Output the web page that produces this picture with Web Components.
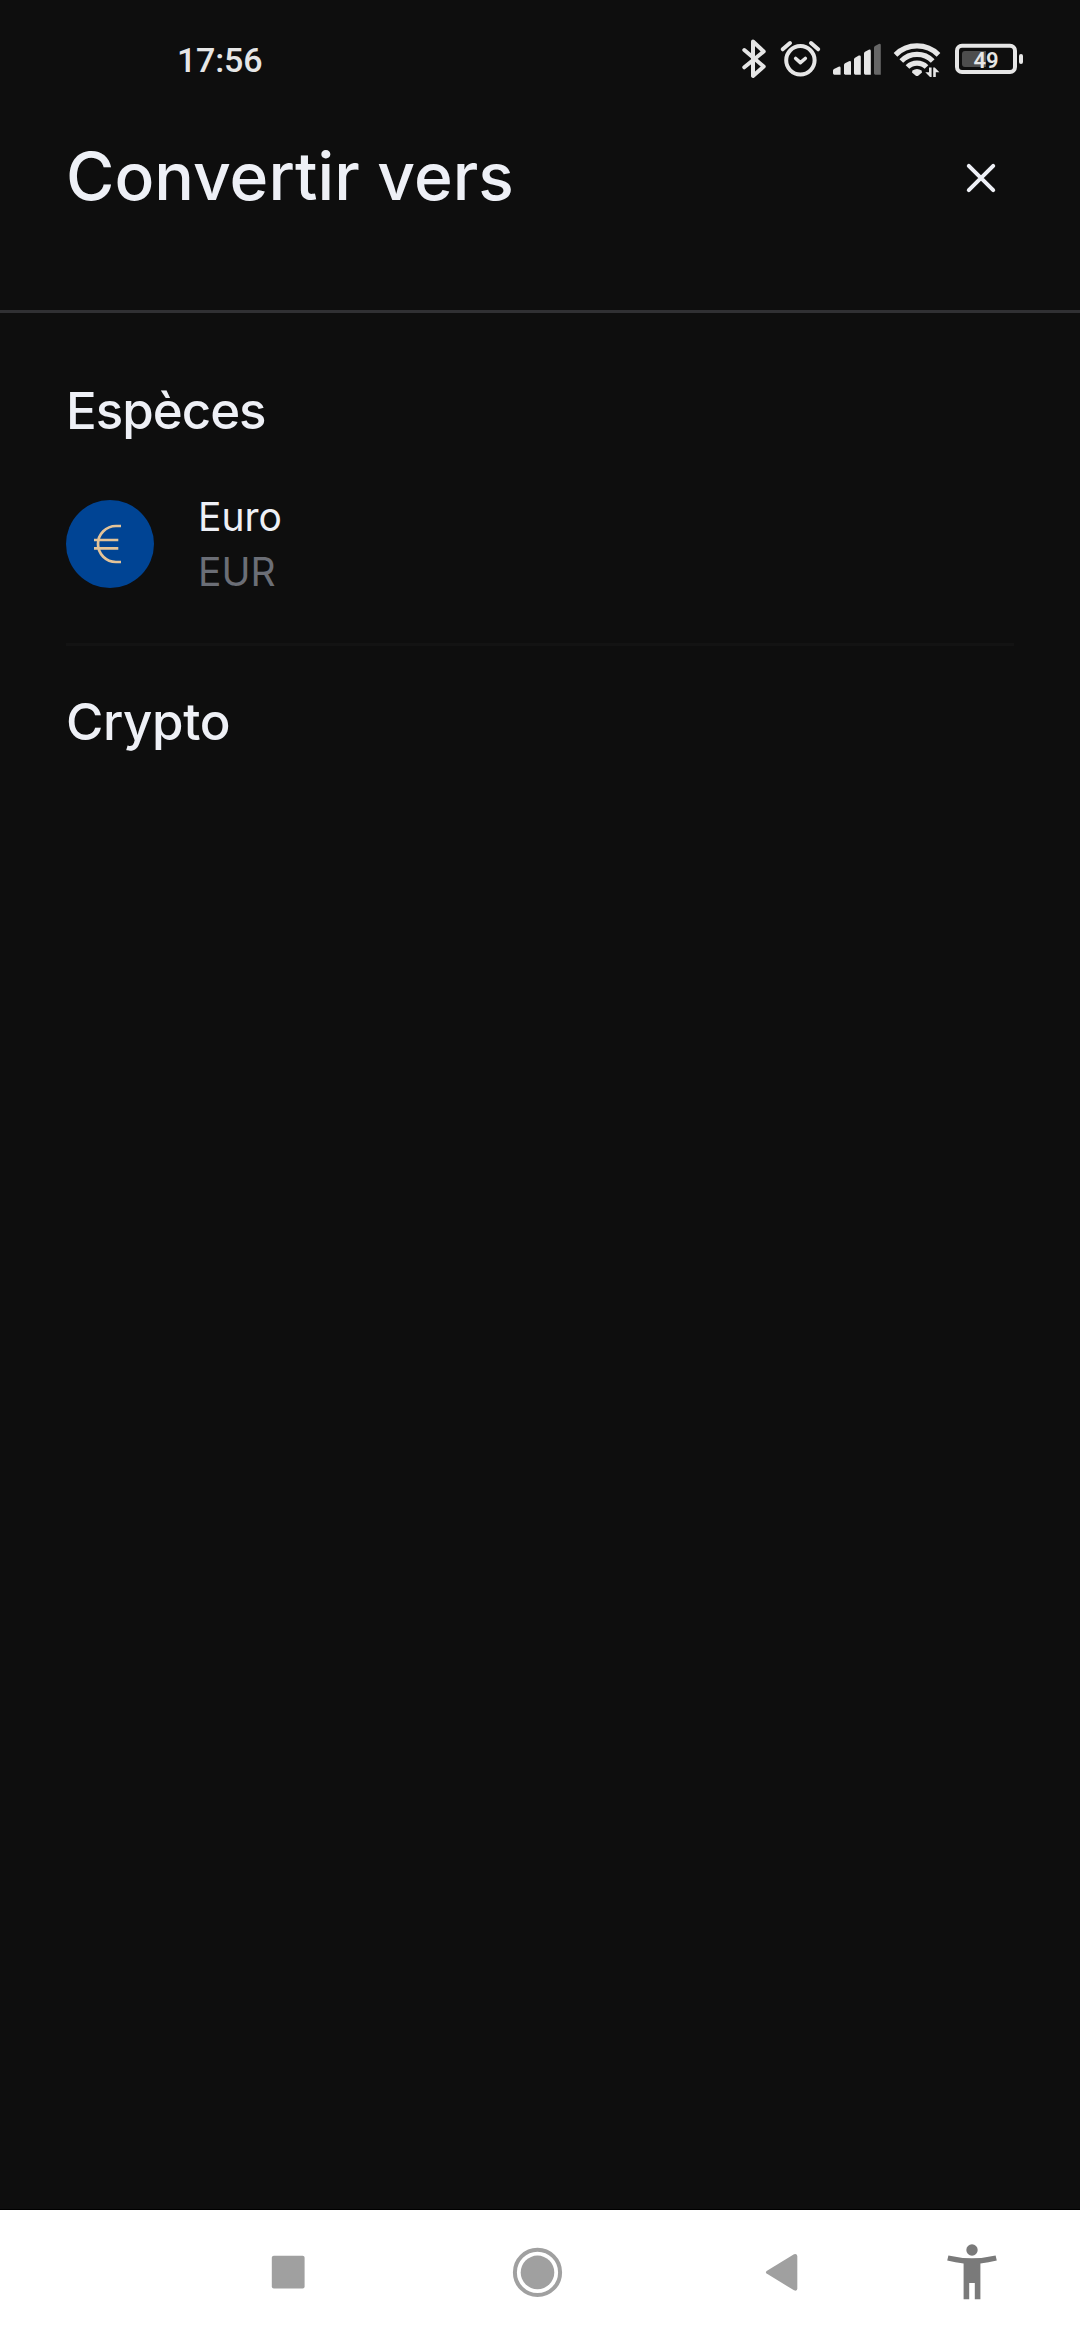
<!DOCTYPE html>
<html lang="fr">
<head>
<meta charset="utf-8">
<title>Convertir vers</title>
<style>
  body {
    margin: 0;
    background: #0e0e0e;
    color: #eef0f6;
    font-family: Inter, Roboto, sans-serif;
  }
</style>
</head>
<body>
<convert-screen>
  <status-bar slot="status" time="17:56" battery="49"></status-bar>
  <sheet-header slot="header">Convertir vers</sheet-header>
  <currency-section>
    <span slot="title">Espèces</span>
    <currency-row code="EUR">Euro</currency-row>
  </currency-section>
  <currency-section class="crypto">
    <span slot="title">Crypto</span>
  </currency-section>
  <nav-bar slot="nav"></nav-bar>
</convert-screen>

<script>
class ConvertScreen extends HTMLElement {
  connectedCallback() {
    this.attachShadow({ mode: 'open' });
    this.shadowRoot.innerHTML = `
      <style>
        :host {
          display: flex;
          flex-direction: column;
          width: 1080px;
          height: 2340px;
          overflow: hidden;
        }
        main {
          flex: 1;
          padding: 0 66px;
        }
      </style>
      <slot name="status"></slot>
      <slot name="header"></slot>
      <main><slot></slot></main>
      <slot name="nav"></slot>
    `;
  }
}

class StatusBar extends HTMLElement {
  connectedCallback() {
    this.attachShadow({ mode: 'open' });
    this.shadowRoot.innerHTML = `
      <style>
        :host {
          display: flex;
          justify-content: space-between;
          height: 100px;
          padding: 0 56px 0 177px;
          box-sizing: border-box;
          color: #e6e6e6;
          font-family: Roboto, sans-serif;
        }
        .time {
          padding-top: 40px;
          font-size: 34px;
          line-height: 40px;
          font-weight: 500;
          letter-spacing: -0.2px;
        }
        .icons {
          display: flex;
          height: 100px;
        }
        svg {
          display: block;
          fill: none;
          stroke: currentColor;
          stroke-width: 4;
          stroke-linecap: round;
          stroke-linejoin: round;
        }
        .solid {
          fill: currentColor;
          stroke: none;
        }
        .level {
          fill: #4d4d4d;
          stroke: none;
        }
      </style>
      <span class="time">${this.getAttribute('time')}</span>
      <div class="icons">
        <svg width="40" height="100" viewBox="738 0 40 100">
          <path d="M744.3 50L763.7 66.5L753 76V41.5L763.7 51.5L744.3 67.3"/>
        </svg>
        <svg width="50" height="100" viewBox="778 0 50 100">
          <circle cx="800.4" cy="60.3" r="14.2"/>
          <path d="M782.7 49.3L790 43M811 43L818.2 49.3"/>
          <path d="M795.7 58.5L800.4 62.7L805.3 58.5" stroke-width="3.6"/>
        </svg>
        <svg class="solid" width="60" height="100" viewBox="828 0 60 100">
          <path d="M833 70.5q0-1 1-1.6l4.6-2.2q2-.6 2 1.2v6.8h-6.2q-1.4 0-1.4-1.4z"/>
          <path d="M844 64.8q0-1 1-1.6l4-2q2-.6 2 1.2v12.3h-5.6q-1.4 0-1.4-1.4z"/>
          <path d="M854 59.3q0-1 1-1.6l3.8-2.1q2-.6 2 1.2v17.9h-5.4q-1.4 0-1.4-1.4z"/>
          <path d="M864 53.4q0-1 1-1.6l3.8-2.1q2-.6 2 1.2v23.8h-5.4q-1.4 0-1.4-1.4z"/>
          <path fill="#666" d="M874 47.7q0-1 1-1.6l3.8-2.1q2-.6 2 1.2v29.5h-5.4q-1.4 0-1.4-1.4z"/>
        </svg>
        <svg width="60" height="100" viewBox="888 0 60 100">
          <g stroke-width="5.2" stroke-linecap="butt">
            <path d="M895.5 54.8A30.5 30.5 0 0 1 938.5 54.8"/>
            <path d="M901.3 61A21.8 21.8 0 0 1 932.7 61"/>
            <path d="M907.5 67A13.5 13.5 0 0 1 926.5 67"/>
          </g>
          <path class="solid" d="M912.4 70.6Q917 67.4 921.6 70.6L922 72.4L918.5 75.4Q917 76.6 915.5 75.4L912 72.4Z"/>
          <path class="solid" d="M929 67.5H931.6V77H930L925.3 72.3H929ZM933.2 77V67.5H934.8L939.4 72.2H935.8V77Z"/>
        </svg>
        <svg width="76" height="100" viewBox="948 0 76 100">
          <rect x="957" y="45.8" width="58" height="26.2" rx="5"/>
          <path class="level" d="M965 51H986V67H965Q962 67 962 64V54Q962 51 965 51Z"/>
          <rect class="solid" x="1019" y="54" width="4" height="10" rx="2"/>
          <text class="solid" x="986" y="67.6" text-anchor="middle" font-size="22" font-weight="600">${this.getAttribute('battery')}</text>
        </svg>
      </div>
    `;
  }
}

class SheetHeader extends HTMLElement {
  connectedCallback() {
    this.attachShadow({ mode: 'open' });
    this.shadowRoot.innerHTML = `
      <style>
        :host {
          display: flex;
          justify-content: space-between;
          align-items: flex-start;
          height: 213px;
          padding: 36px 79px 0 66px;
          box-sizing: border-box;
          border-bottom: 3px solid #303033;
        }
        h1 {
          margin: 0;
          font-size: 66px;
          line-height: 80px;
          font-weight: 500;
        }
        button {
          margin: 22px 0 0;
          padding: 0;
          border: 0;
          background: none;
          color: inherit;
        }
        svg {
          display: block;
        }
      </style>
      <h1><slot></slot></h1>
      <button aria-label="Fermer">
        <svg width="40" height="40" viewBox="0 0 40 40" fill="none" stroke="currentColor" stroke-width="4" stroke-linecap="round">
          <path d="M7.8 7.8L32.2 32.2M32.2 7.8L7.8 32.2"/>
        </svg>
      </button>
    `;
  }
}

class CurrencySection extends HTMLElement {
  connectedCallback() {
    this.attachShadow({ mode: 'open' });
    this.shadowRoot.innerHTML = `
      <style>
        :host {
          display: block;
          padding-top: 68px;
        }
        :host(.crypto) {
          padding-top: 46px;
        }
        h2 {
          margin: 0;
          font-size: 51px;
          line-height: 60px;
          font-weight: 500;
          letter-spacing: -1px;
        }
        :host(.crypto) h2 {
          letter-spacing: -0.4px;
        }
      </style>
      <h2><slot name="title"></slot></h2>
      <slot></slot>
    `;
  }
}

class CurrencyRow extends HTMLElement {
  connectedCallback() {
    this.attachShadow({ mode: 'open' });
    this.shadowRoot.innerHTML = `
      <style>
        :host {
          display: flex;
          gap: 44px;
          height: 205px;
          padding-top: 48px;
          box-sizing: border-box;
          border-bottom: 3px solid #131313;
        }
        .flag {
          width: 88px;
          height: 88px;
          margin-top: 11px;
        }
        .label {
          display: flex;
          flex-direction: column;
          font-size: 39px;
          line-height: 55px;
        }
        .code {
          color: #6b6e76;
        }
      </style>
      <svg class="flag" viewBox="0 0 88 88">
        <circle cx="44" cy="44" r="44" fill="#004494"/>
        <path d="M55 26H50A18 18 0 0 0 50 62H55M28 40H52.3M28 48.3H52.3" fill="none" stroke="#e3c398" stroke-width="2.7"/>
      </svg>
      <div class="label">
        <span><slot></slot></span>
        <span class="code">${this.getAttribute('code')}</span>
      </div>
    `;
  }
}

class NavBar extends HTMLElement {
  connectedCallback() {
    this.attachShadow({ mode: 'open' });
    this.shadowRoot.innerHTML = `
      <style>
        :host {
          display: flex;
          align-items: flex-start;
          height: 131px;
          padding: 32px 0 0 258px;
          box-sizing: border-box;
          border-top: 1px solid #000;
          background: #fff;
          color: #a0a0a0;
        }
        svg {
          width: 60px;
          height: 60px;
          fill: currentColor;
        }
        .home {
          margin-left: 189px;
        }
        .back {
          margin-left: 185px;
        }
        .person {
          margin-left: 130px;
          color: #7a7a7a;
        }
      </style>
      <svg viewBox="258 2242 60 60">
        <rect x="271.8" y="2255.8" width="32.8" height="32.6" rx="2"/>
      </svg>
      <svg class="home" viewBox="507 2242 60 60">
        <circle cx="537.5" cy="2272.4" r="22.6" fill="none" stroke="currentColor" stroke-width="4"/>
        <circle cx="537.5" cy="2272.4" r="16.8"/>
      </svg>
      <svg class="back" viewBox="752 2242 60 60">
        <path d="M766.6 2271L794 2254.3Q797.3 2253 797.3 2256.5V2288.5Q797.3 2291.5 794 2290.3L766.6 2273.6Q765.2 2272.3 766.6 2271Z"/>
      </svg>
      <svg class="person" viewBox="942 2242 60 60">
        <circle cx="972" cy="2250" r="5.7"/>
        <path d="M948.4 2255.5Q972 2261 995.6 2255.5L996.8 2260.6Q988.5 2262.8 980.4 2263.4V2299.3H974.8V2283H969.2V2299.3H963.6V2263.4Q955.5 2262.8 947.2 2260.6Z"/>
      </svg>
    `;
  }
}

customElements.define('convert-screen', ConvertScreen);
customElements.define('status-bar', StatusBar);
customElements.define('sheet-header', SheetHeader);
customElements.define('currency-section', CurrencySection);
customElements.define('currency-row', CurrencyRow);
customElements.define('nav-bar', NavBar);
</script>
</body>
</html>
